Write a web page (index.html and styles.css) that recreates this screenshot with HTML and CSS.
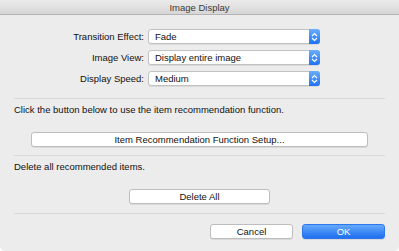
FILE: index.html
```html
<!DOCTYPE html>
<html lang="en">
<head>
    <meta charset="UTF-8" />
    <title>Image Display</title>
    <link rel="stylesheet" href="styles.css">
</head>
<body>
    <div class="window">
        <div class="titlebar">Image Display</div>

        <div class="content">
            <div class="form">
                <label>Transition Effect:</label>
                <div class="popup"><span>Fade</span><span class="stepper"><svg width="7" height="10" viewBox="0 0 7 10"><path d="M1 4 L3.5 1.5 L6 4 M1 6 L3.5 8.5 L6 6" fill="none" stroke="#fff" stroke-width="1.2"/></svg></span></div>

                <label>Image View:</label>
                <div class="popup"><span>Display entire image</span><span class="stepper"><svg width="7" height="10" viewBox="0 0 7 10"><path d="M1 4 L3.5 1.5 L6 4 M1 6 L3.5 8.5 L6 6" fill="none" stroke="#fff" stroke-width="1.2"/></svg></span></div>

                <label>Display Speed:</label>
                <div class="popup"><span>Medium</span><span class="stepper"><svg width="7" height="10" viewBox="0 0 7 10"><path d="M1 4 L3.5 1.5 L6 4 M1 6 L3.5 8.5 L6 6" fill="none" stroke="#fff" stroke-width="1.2"/></svg></span></div>
            </div>

            <hr class="sep first">

            <p class="note">Click the button below to use the item recommendation function.</p>
            <button class="btn wide">Item Recommendation Function Setup...</button>

            <hr class="sep">

            <p class="note">Delete all recommended items.</p>
            <div class="center">
                <button class="btn delete">Delete All</button>
            </div>

            <hr class="sep last">

            <div class="footer">
                <button class="btn action">Cancel</button>
                <button class="btn action primary">OK</button>
            </div>
        </div>
    </div>
</body>
</html>
```

FILE: styles.css
```css
body {
    margin: 0;
    padding: 0;
    background-color: #ffffff;
    font-family: 'Liberation Sans', Arial, sans-serif;
    color: #111;
}

.window {
    width: 399px;
    height: 251px;
    background-color: #ececec;
    border-radius: 0 0 5px 5px;
    overflow: hidden;
}

.titlebar {
    height: 14px;
    line-height: 15px;
    text-align: center;
    font-size: 9.5px;
    color: #3a3a3a;
    background: linear-gradient(#ebebeb, #d6d6d6);
    border-bottom: 1px solid #b4b4b4;
}

.content {
    padding: 0 14px;
}

.form {
    display: grid;
    grid-template-columns: 130px 172px;
    column-gap: 4px;
    row-gap: 6px;
    align-items: center;
    padding-top: 14px;
}

.form label {
    text-align: right;
    font-size: 9.5px;
    line-height: 11px;
}

.popup {
    height: 13px;
    background-color: #fff;
    border: 1px solid #c2c2c2;
    border-radius: 3px;
    box-shadow: 0 1px 0 rgba(0, 0, 0, 0.08);
    display: flex;
    justify-content: space-between;
    align-items: center;
    font-size: 9.5px;
    padding-left: 6px;
}

.stepper {
    width: 11px;
    height: 15px;
    margin: -1px -1px -1px 0;
    border-radius: 0 3px 3px 0;
    background: linear-gradient(#6aaefb, #1f72f2);
    display: flex;
    align-items: center;
    justify-content: center;
}

.sep {
    border: none;
    border-top: 1px solid #d9d9d9;
    margin: 8px 0 0;
}

.sep.first {
    margin-top: 12px;
}

.note {
    font-size: 9.5px;
    margin: 5px 0 0;
    line-height: 11px;
}

.btn {
    font-family: 'Liberation Sans', Arial, sans-serif;
    font-size: 9.5px;
    color: #111;
    background-color: #fff;
    border: 1px solid #bdbdbd;
    border-radius: 3px;
    box-shadow: 0 1px 0 rgba(0, 0, 0, 0.08);
    height: 15px;
    padding: 0;
    line-height: 13px;
}

.wide {
    display: block;
    width: 337px;
    margin: 17px 0 0 17px;
}

.center {
    display: flex;
    justify-content: center;
    margin-top: 17px;
}

.delete {
    width: 141px;
}

.sep.last {
    margin-top: 9px;
}

.footer {
    display: flex;
    justify-content: flex-end;
    gap: 9px;
    margin-top: 10px;
}

.action {
    width: 83px;
}

.primary {
    color: #fff;
    border-color: #2b78ee;
    background: linear-gradient(#66a9fb, #1e6ff0);
}
```
